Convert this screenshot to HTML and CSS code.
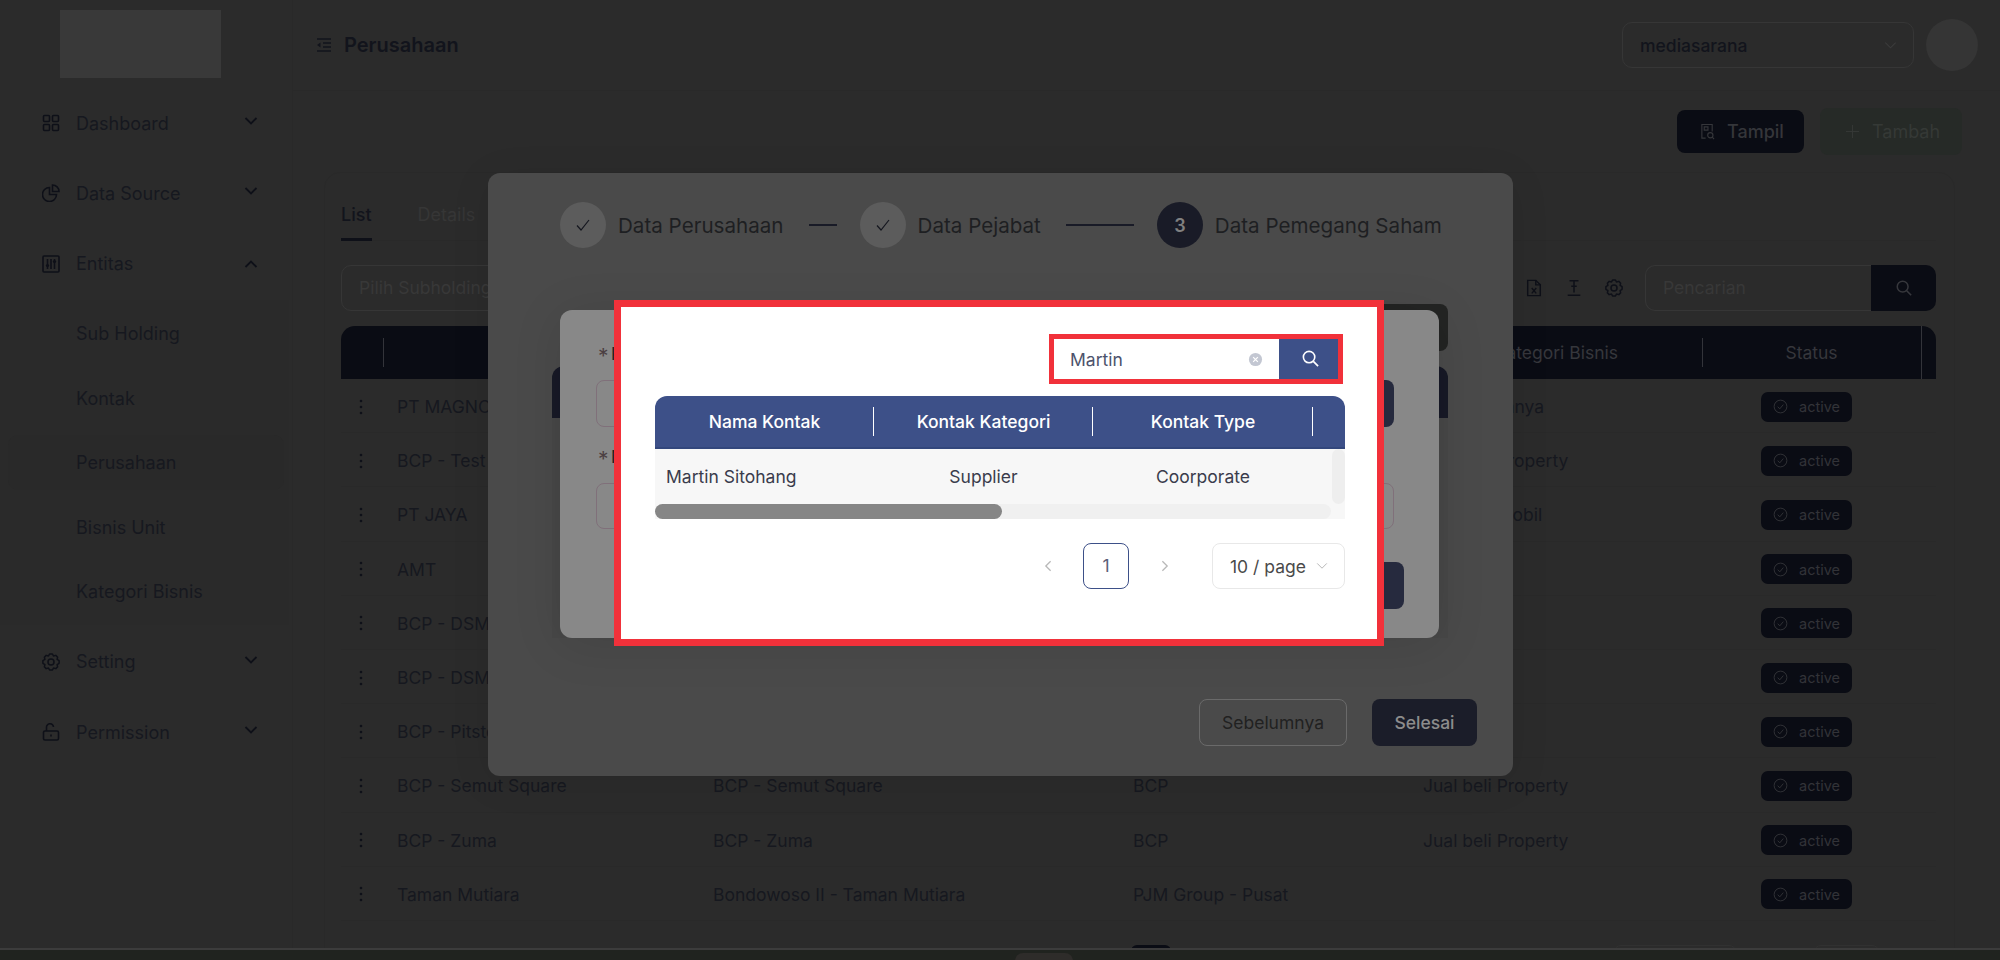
FILE: index.html
```html
<!DOCTYPE html>
<html>
<head>
    <title>Perusahaan</title>
    <link rel="stylesheet" href="styles.css">
</head>
<body>
<svg class="sprite" xmlns="http://www.w3.org/2000/svg">
    <symbol id="i-chevron" viewBox="0 0 16 16"><path d="M2.5 5l5.5 5.5L13.500 5" fill="none" stroke="currentColor"/></symbol>
    <symbol id="i-search" viewBox="0 0 20 20"><circle cx="8.500" cy="8.500" r="6" fill="none" stroke="currentColor" stroke-width="1.700"/><path d="M13 13l5 5" fill="none" stroke="currentColor" stroke-width="1.700"/></symbol>
    <symbol id="i-check" viewBox="0 0 16 16"><path d="M2 8.500l4 4.500 8-10" fill="none" stroke="currentColor" stroke-width="1.200"/></symbol>
    <symbol id="i-kebab" viewBox="0 0 4 16"><circle cx="2" cy="2" r="1.300" fill="currentColor"/><circle cx="2" cy="8" r="1.300" fill="currentColor"/><circle cx="2" cy="14" r="1.300" fill="currentColor"/></symbol>
    <symbol id="i-active" viewBox="0 0 16 16"><circle cx="8" cy="8" r="6.800" fill="none" stroke="currentColor" stroke-width="1"/><path d="M5 8.200l2.200 2.300L11 6" fill="none" stroke="currentColor" stroke-width="1"/></symbol>
    <symbol id="i-gear" viewBox="0 0 18 18"><g fill="none" stroke="currentColor" stroke-width="1.500" stroke-linejoin="round"><path d="M7.720.9h2.560l1.250 2 2.290-.53 1.810 1.810-.53 2.290 2 1.250v2.560l-2 1.250.53 2.290-1.810 1.810-2.290-.53-1.250 2H7.720l-1.250-2-2.290.53-1.810-1.810.53-2.290-2-1.250V7.720l2-1.250-.53-2.290 1.810-1.810 2.290.53z"/><circle cx="9" cy="9" r="3"/></g></symbol>
</svg>

<div class="app">
    <aside class="sidebar">
        <div class="logo-wrap"><div class="logo"></div></div>

        <div class="menu-item">
            <svg class="menu-icon" viewBox="0 0 18 18"><g fill="none" stroke="currentColor" stroke-width="1.600"><rect x="1.500" y="1.500" width="6" height="6" rx="1"/><rect x="10.500" y="1.500" width="6" height="6" rx="1"/><rect x="1.500" y="10.500" width="6" height="6" rx="1"/><rect x="10.500" y="10.500" width="6" height="6" rx="1"/></g></svg>
            <span>Dashboard</span>
            <svg class="menu-chevron"><use href="#i-chevron"/></svg>
        </div>
        <div class="menu-item">
            <svg class="menu-icon" viewBox="0 0 18 18"><g fill="none" stroke="currentColor" stroke-width="1.600"><path d="M7.500 3.500a7 7 0 1 0 7 7h-7z"/><path d="M10.500 1a6.500 6.500 0 0 1 6.500 6.500h-6.500z"/></g></svg>
            <span>Data Source</span>
            <svg class="menu-chevron"><use href="#i-chevron"/></svg>
        </div>
        <div class="menu-item">
            <svg class="menu-icon" viewBox="0 0 18 18"><g fill="none" stroke="currentColor" stroke-width="1.600"><rect x="1" y="1" width="16" height="16" rx="1"/><path d="M5.500 4v10M12.500 4v10M9 4v10"/></g><circle cx="5.500" cy="10.500" r="1.600" fill="currentColor"/><circle cx="12.500" cy="6.500" r="1.600" fill="currentColor"/></svg>
            <span>Entitas</span>
            <svg class="menu-chevron flip"><use href="#i-chevron"/></svg>
        </div>

        <div class="submenu">
            <div class="sub-item">Sub Holding</div>
            <div class="sub-item">Kontak</div>
            <div class="sub-item selected">Perusahaan</div>
            <div class="sub-item">Bisnis Unit</div>
            <div class="sub-item">Kategori Bisnis</div>
        </div>

        <div class="menu-item after-sub">
            <svg class="menu-icon"><use href="#i-gear"/></svg>
            <span>Setting</span>
            <svg class="menu-chevron"><use href="#i-chevron"/></svg>
        </div>
        <div class="menu-item">
            <svg class="menu-icon" viewBox="0 0 18 18"><g fill="none" stroke="currentColor" stroke-width="1.600"><rect x="1.500" y="8" width="15" height="9" rx="1.500"/><path d="M4.500 8V4.500a3.500 3.500 0 0 1 7-.5"/><path d="M9 11.500v2"/></g></svg>
            <span>Permission</span>
            <svg class="menu-chevron"><use href="#i-chevron"/></svg>
        </div>
    </aside>

    <main class="main">
        <header class="topbar">
            <svg class="topbar-icon" viewBox="0 0 16 16"><path d="M1 2h14M7 6h8M7 10h8M1 14h14" fill="none" stroke="currentColor" stroke-width="1.500"/><path d="M4.500 5.500L1 8l3.500 2.500z" fill="currentColor"/></svg>
            <h1 class="page-title">Perusahaan</h1>
            <div class="company-select">
                <span>mediasarana</span>
                <svg class="select-chevron"><use href="#i-chevron"/></svg>
            </div>
            <div class="avatar"></div>
        </header>

        <div class="actions">
            <button type="button" class="btn-show">
                <svg class="btn-icon" viewBox="0 0 16 18"><g fill="none" stroke="currentColor" stroke-width="1.200"><path d="M6 16H2V1.500h11V9"/><path d="M4.500 4h4v3.500h-4z"/><circle cx="11" cy="13" r="2.800"/><path d="M13 15l2 2"/></g></svg>
                Tampil
            </button>
            <button type="button" class="btn-add">
                <svg class="btn-icon" viewBox="0 0 16 16"><path d="M8 1v14M1 8h14" fill="none" stroke="currentColor" stroke-width="1"/></svg>
                Tambah
            </button>
        </div>

        <section class="card">
            <div class="tabs">
                <span class="tab active">List</span>
                <span class="tab">Details</span>
            </div>

            <div class="filters">
                <div class="subholding-select">Pilih Subholding</div>
                <div class="tools">
                    <svg class="tool-icon" viewBox="0 0 18 20"><g fill="none" stroke="currentColor" stroke-width="1.600"><path d="M2 1.500h9l5 5v12H2z"/><path d="M11 1.500v5h5"/><path d="M6.500 10l5 6M11.500 10l-5 6"/></g></svg>
                    <svg class="tool-icon" viewBox="0 0 18 20"><path d="M4 2h10M9 2v13M6 8h6M2 18h14" fill="none" stroke="currentColor" stroke-width="1.700"/></svg>
                    <svg class="tool-icon"><use href="#i-gear"/></svg>
                </div>
                <div class="page-search">
                    <div class="page-search-input">Pencarian</div>
                    <div class="page-search-btn"><svg class="search-icon"><use href="#i-search"/></svg></div>
                </div>
            </div>

            <div class="table-head">
                <div class="head-first"></div>
                <div class="head-cat">Kategori Bisnis</div>
                <div class="head-status">Status</div>
                <div class="head-last"></div>
            </div>

            <div class="table-row">
                <svg class="kebab"><use href="#i-kebab"/></svg><span>PT MAGNOLIA</span><span></span><span></span><span>Usaha Lainnya</span>
                <div class="badge"><svg class="badge-icon"><use href="#i-active"/></svg>active</div>
            </div>
            <div class="table-row">
                <svg class="kebab"><use href="#i-kebab"/></svg><span>BCP - Test</span><span></span><span></span><span>Jual beli Property</span>
                <div class="badge"><svg class="badge-icon"><use href="#i-active"/></svg>active</div>
            </div>
            <div class="table-row">
                <svg class="kebab"><use href="#i-kebab"/></svg><span>PT JAYA</span><span></span><span></span><span>Jual beli Mobil</span>
                <div class="badge"><svg class="badge-icon"><use href="#i-active"/></svg>active</div>
            </div>
            <div class="table-row">
                <svg class="kebab"><use href="#i-kebab"/></svg><span>AMT</span><span></span><span></span><span></span>
                <div class="badge"><svg class="badge-icon"><use href="#i-active"/></svg>active</div>
            </div>
            <div class="table-row">
                <svg class="kebab"><use href="#i-kebab"/></svg><span>BCP - DSM</span><span></span><span></span><span></span>
                <div class="badge"><svg class="badge-icon"><use href="#i-active"/></svg>active</div>
            </div>
            <div class="table-row">
                <svg class="kebab"><use href="#i-kebab"/></svg><span>BCP - DSM</span><span></span><span></span><span></span>
                <div class="badge"><svg class="badge-icon"><use href="#i-active"/></svg>active</div>
            </div>
            <div class="table-row">
                <svg class="kebab"><use href="#i-kebab"/></svg><span>BCP - Pitstop</span><span></span><span></span><span></span>
                <div class="badge"><svg class="badge-icon"><use href="#i-active"/></svg>active</div>
            </div>
            <div class="table-row">
                <svg class="kebab"><use href="#i-kebab"/></svg><span>BCP - Semut Square</span><span>BCP - Semut Square</span><span>BCP</span><span>Jual beli Property</span>
                <div class="badge"><svg class="badge-icon"><use href="#i-active"/></svg>active</div>
            </div>
            <div class="table-row">
                <svg class="kebab"><use href="#i-kebab"/></svg><span>BCP - Zuma</span><span>BCP - Zuma</span><span>BCP</span><span>Jual beli Property</span>
                <div class="badge"><svg class="badge-icon"><use href="#i-active"/></svg>active</div>
            </div>
            <div class="table-row">
                <svg class="kebab"><use href="#i-kebab"/></svg><span>Taman Mutiara</span><span>Bondowoso II - Taman Mutiara</span><span>PJM Group - Pusat</span><span></span>
                <div class="badge"><svg class="badge-icon"><use href="#i-active"/></svg>active</div>
            </div>

            <div class="page-pager">
                <div class="pager-current"></div>
                <div class="pager-jump"></div>
                <div class="pager-size"></div>
            </div>
        </section>
    </main>
</div>
<div class="taskbar"><div class="taskbar-tab"></div></div>

<!-- step form modal -->
<div class="modal-steps">
    <div class="steps">
        <div class="step-dot done"><svg class="step-check"><use href="#i-check"/></svg></div>
        <span class="step-label">Data Perusahaan</span>
        <div class="step-line short"></div>
        <div class="step-dot done"><svg class="step-check"><use href="#i-check"/></svg></div>
        <span class="step-label">Data Pejabat</span>
        <div class="step-line long"></div>
        <div class="step-dot current">3</div>
        <span class="step-label">Data Pemegang Saham</span>
    </div>
    <div class="steps-body">
        <div class="steps-add"></div>
        <div class="steps-table-head"></div>
        <div class="steps-table-body"></div>
    </div>
    <div class="steps-footer">
        <button type="button" class="btn-prev">Sebelumnya</button>
        <button type="button" class="btn-finish">Selesai</button>
    </div>
</div>

<!-- shareholder form -->
<div class="modal-form">
    <div class="form-label"><i>*</i>K</div>
    <div class="form-row">
        <div class="form-input"></div>
        <div class="form-pick"></div>
    </div>
    <div class="form-label second"><i>*</i>N</div>
    <div class="form-row">
        <div class="form-input"></div>
    </div>
    <div class="form-save"></div>
</div>

<!-- highlighted contact picker -->
<div class="modal-picker">
    <div class="picker-search">
        <div class="picker-input">
            <span>Martin</span>
            <svg class="clear-icon" viewBox="0 0 16 16"><circle cx="8" cy="8" r="7" fill="#c3c7d2"/><path d="M5.500 5.500l5 5M10.500 5.500l-5 5" stroke="#fff" stroke-width="1.300"/></svg>
        </div>
        <div class="picker-btn"><svg class="picker-search-icon"><use href="#i-search"/></svg></div>
    </div>

    <div class="picker-table">
        <div class="picker-head">
            <div class="picker-th">Nama Kontak</div>
            <div class="picker-th">Kontak Kategori</div>
            <div class="picker-th">Kontak Type</div>
            <div></div>
        </div>
        <div class="picker-row">
            <div class="picker-td first">Martin Sitohang</div>
            <div class="picker-td">Supplier</div>
            <div class="picker-td">Coorporate</div>
            <div class="picker-vscroll"></div>
        </div>
        <div class="picker-hscroll">
            <div class="picker-track"><div class="picker-thumb"></div></div>
        </div>
    </div>

    <div class="picker-pager">
        <svg class="pager-arrow left"><use href="#i-chevron"/></svg>
        <div class="pager-number">1</div>
        <svg class="pager-arrow right"><use href="#i-chevron"/></svg>
        <div class="pager-select">10 / page <svg class="pager-select-chevron"><use href="#i-chevron"/></svg></div>
    </div>
</div>
</body>
</html>
```

FILE: styles.css
```css
html, body {
    margin: 0;
    padding: 0;
    height: 960px;
    overflow: hidden;
    background-color: #2b2b2b;
    color: #16181f;
    font-family: Inter, "Noto Sans", sans-serif;
}

button {
    font-family: inherit;
    border: none;
    padding: 0;
}

.sprite {
    display: none;
}

.app {
    display: flex;
    height: 948px;
    overflow: hidden;
}

/* sidebar */
.sidebar {
    width: 292px;
    flex-shrink: 0;
    border-right: 1px solid #292929;
}

.logo-wrap {
    height: 98px;
    padding: 10px 0 0 60px;
    box-sizing: border-box;
}

.logo {
    width: 161px;
    height: 68px;
    background-color: #393939;
}

.menu-item {
    display: flex;
    align-items: center;
    height: 50px;
    margin-bottom: 20.300px;
    padding-left: 42px;
    font-size: 18px;
    color: #16181f;
}

.menu-item span {
    margin-left: 16px;
}

.menu-icon {
    width: 18px;
    height: 18px;
    color: #0e1018;
}

.menu-chevron {
    width: 16px;
    height: 16px;
    margin-left: auto;
    margin-right: 33px;
    margin-top: -4px;
    color: #0e1018;
    stroke-width: 1.800;
}

.menu-chevron.flip {
    transform: rotate(180deg);
    margin-top: 0;
}

.submenu {
    width: 289px;
    margin-top: -9px;
    padding: 6.500px 0 5.500px;
    box-sizing: border-box;
    height: 325px;
    background-color: #2a2a2a;
}

.sub-item {
    height: 55px;
    margin-bottom: 9.500px;
    padding-left: 76px;
    font-size: 18px;
    line-height: 56px;
    color: #16181f;
}

.sub-item:last-child {
    margin-bottom: 0;
}

.sub-item.selected {
    margin: 0 5px 9.500px 8px;
    padding-left: 68px;
    border-radius: 10px;
    background-color: #292929;
}

.menu-item.after-sub {
    margin-top: 12px;
}

/* main area */
.main {
    flex: 1;
    min-width: 0;
}

.topbar {
    display: flex;
    align-items: center;
    height: 91px;
    box-sizing: border-box;
    padding: 0 22px 0 23px;
    border-bottom: 1px solid #292929;
}

.topbar-icon {
    width: 16px;
    height: 16px;
    color: #12141c;
}

.page-title {
    margin: 0 0 0 12px;
    font-size: 20px;
    font-weight: 600;
    color: #12141c;
}

.company-select {
    display: flex;
    align-items: center;
    justify-content: space-between;
    width: 292px;
    height: 46px;
    margin-left: auto;
    padding: 0 15px 0 17px;
    box-sizing: border-box;
    border: 1px solid #363636;
    border-radius: 10px;
    font-size: 17.500px;
    font-weight: 500;
    color: #12141c;
}

.select-chevron {
    width: 15px;
    height: 15px;
    color: #3c3c3c;
    stroke-width: 1.100;
}

.avatar {
    width: 52px;
    height: 52px;
    margin-left: 12px;
    border-radius: 50%;
    background-color: #353535;
}

.actions {
    display: flex;
    align-items: center;
    justify-content: flex-end;
    gap: 16px;
    height: 47px;
    padding: 17px 38px 0 0;
}

.btn-show, .btn-add {
    display: flex;
    align-items: center;
    font-size: 18px;
    font-weight: 500;
    border-radius: 8px;
}

.btn-show {
    width: 127px;
    height: 43px;
    padding-left: 23px;
    box-sizing: border-box;
    background-color: #0a0c14;
    color: #35363a;
}

.btn-add {
    width: 142px;
    height: 47px;
    padding-left: 25px;
    box-sizing: border-box;
    font-weight: 400;
    background-color: #262a27;
    color: #353936;
}

.btn-icon {
    width: 15px;
    height: 17px;
    margin-right: 12px;
}

.card {
    width: 1631px;
    height: 800px;
    margin: 17px 0 0 31px;
    padding: 0 18px 0 16px;
    box-sizing: border-box;
    border: 1px solid #292929;
    border-radius: 16px;
}

.tabs {
    display: flex;
    gap: 46px;
    height: 68px;
    box-sizing: border-box;
    border-bottom: 1px solid #292929;
    padding-top: 29px;
}

.tab {
    height: 39px;
    box-sizing: border-box;
    font-size: 18px;
    line-height: 26px;
    color: #363636;
}

.tab.active {
    border-bottom: 3px solid #0e1018;
    font-weight: 500;
    color: #12141c;
}

.filters {
    display: flex;
    align-items: center;
    height: 46px;
    margin-top: 24px;
    margin-bottom: 15px;
}

.subholding-select {
    width: 400px;
    height: 46px;
    box-sizing: border-box;
    padding-left: 17px;
    line-height: 44px;
    font-size: 17.500px;
    color: #383838;
    border: 1px solid #363636;
    border-radius: 10px;
}

.tools {
    display: flex;
    align-items: center;
    gap: 22px;
    margin-left: auto;
    margin-right: 22px;
}

.tool-icon {
    width: 18px;
    height: 18px;
    color: #0e1018;
}

.page-search {
    display: flex;
    width: 291px;
    height: 46px;
}

.page-search-input {
    flex: 1;
    box-sizing: border-box;
    padding-left: 17px;
    line-height: 44px;
    font-size: 17.500px;
    color: #383838;
    border: 1px solid #363636;
    border-right: none;
    border-radius: 10px 0 0 10px;
}

.page-search-btn {
    display: flex;
    align-items: center;
    justify-content: center;
    width: 65px;
    background-color: #0a0c14;
    border-radius: 0 10px 10px 0;
}

.search-icon {
    width: 18px;
    height: 18px;
    color: #36373c;
}

.table-head {
    display: grid;
    grid-template-columns: 43px 1318px 219px 16px;
    align-items: center;
    height: 53px;
    font-size: 17.500px;
    color: #36373c;
    background-color: #0a0c14;
    border-radius: 14px 14px 0 0;
}

.head-first {
    height: 29px;
    border-right: 1px solid #33343a;
}

.head-cat {
    padding-right: 84px;
    text-align: right;
    height: 29px;
    line-height: 29px;
    box-sizing: border-box;
    border-right: 1px solid #33343a;
    margin-right: -1px;
}

.head-status {
    text-align: center;
    line-height: 53px;
}

.head-last {
    height: 53px;
    border-left: 1px solid #33343a;
}

.table-row {
    display: grid;
    grid-template-columns: 56px 316px 420px 290px 338px 91px;
    align-items: center;
    height: 54.200px;
    padding-top: 2px;
    box-sizing: border-box;
    border-bottom: 1px solid #292929;
    font-size: 17.500px;
    color: #16181f;
}

.kebab {
    width: 4px;
    height: 16px;
    margin-left: 18px;
    color: #0e1018;
}

.badge {
    display: flex;
    align-items: center;
    height: 30px;
    padding-left: 12px;
    border-radius: 7px;
    background-color: #0a0c14;
    font-size: 14.500px;
    color: #323338;
}

.badge-icon {
    width: 15px;
    height: 15px;
    margin-right: 11px;
}

.page-pager {
    display: flex;
    margin-top: 24px;
}

.pager-current {
    width: 40px;
    height: 40px;
    margin-left: 790px;
    border-radius: 6px;
    background-color: #0a0c14;
}

.pager-jump, .pager-size {
    height: 40px;
    border-radius: 8px;
    border: 1px solid #313131;
    box-sizing: border-box;
}

.pager-jump {
    width: 124px;
    margin-left: 442px;
}

.pager-size {
    width: 67px;
    margin-left: 76px;
}

.taskbar {
    position: relative;
    height: 12px;
    box-sizing: border-box;
    border-top: 2px solid #3c3c3c;
    background-color: #20231f;
    overflow: hidden;
}

.taskbar-tab {
    width: 58px;
    height: 8px;
    margin: 3px 0 0 1015px;
    border-radius: 8px 8px 0 0;
    background-color: #2e2c2a;
}

/* step form modal */
.modal-steps {
    position: absolute;
    left: 488px;
    top: 173px;
    width: 1025px;
    height: 603px;
    box-sizing: border-box;
    padding: 29px 36px 0 64px;
    background-color: #4a4a4a;
    border-radius: 12px;
    box-shadow: 0 6px 40px rgba(0, 0, 0, 0.08);
}

.steps {
    display: flex;
    align-items: center;
    height: 46px;
    margin-left: 8px;
    font-size: 20.600px;
    color: #1e1f22;
}

.step-dot {
    display: flex;
    align-items: center;
    justify-content: center;
    width: 46px;
    height: 46px;
    border-radius: 50%;
    font-size: 18px;
    font-weight: 600;
}

.step-dot.done {
    background-color: #5c5c5c;
    color: #15171f;
}

.step-dot.current {
    background-color: #191b27;
    color: #808080;
}

.step-check {
    width: 16px;
    height: 16px;
}

.step-label {
    margin-left: 12px;
}

.step-line {
    height: 2px;
    margin: 0 23px 0 25px;
    background-color: #191b27;
}

.step-line.short {
    width: 28px;
}

.step-line.long {
    width: 68px;
}

.steps-body {
    width: 896px;
    margin-top: 56px;
}

.steps-add {
    width: 100px;
    height: 47px;
    margin-left: auto;
    border-radius: 8px;
    background-color: #232423;
}

.steps-table-head {
    height: 52px;
    margin-top: 15px;
    border-radius: 12px 12px 0 0;
    background-color: #171926;
}

.steps-table-body {
    height: 220px;
    background-color: #474747;
}

.steps-footer {
    display: flex;
    justify-content: flex-end;
    gap: 25px;
    margin-top: 61px;
}

.btn-prev, .btn-finish {
    height: 47px;
    border-radius: 8px;
    font-size: 17.500px;
}

.btn-prev {
    width: 148px;
    background-color: transparent;
    border: 1px solid #6a6a6a;
    color: #212121;
}

.btn-finish {
    width: 105px;
    background-color: #1b1d29;
    color: #8c8c8c;
    font-weight: 500;
}

/* shareholder form */
.modal-form {
    position: absolute;
    left: 560px;
    top: 310px;
    width: 879px;
    height: 328px;
    box-sizing: border-box;
    padding: 33px 45px 0 36px;
    background-color: #888888;
    border-radius: 12px;
    box-shadow: 0 6px 50px rgba(0, 0, 0, 0.1);
}

.form-label {
    height: 22px;
    margin-bottom: 15px;
    font-size: 17.500px;
    line-height: 22px;
    color: #222;
}

.form-label i {
    display: inline-block;
    width: 15px;
    padding-left: 2px;
    box-sizing: border-box;
    font-size: 21px;
    font-style: normal;
    vertical-align: -4px;
    color: #4c3f42;
}

.form-label.second {
    margin-top: 19px;
}

.form-row {
    display: flex;
    height: 47px;
}

.form-row + .form-label + .form-row {
    height: 46px;
}

.form-input {
    flex: 1;
    box-sizing: border-box;
    border: 1px solid #80707a;
    border-radius: 8px;
}

.form-pick {
    width: 100px;
    margin-left: 10px;
    border-radius: 8px;
    background-color: #262a3e;
}

.form-save {
    width: 100px;
    height: 47px;
    margin: 33px -10px 0 auto;
    border-radius: 8px;
    background-color: #262a3e;
}

/* contact picker */
.modal-picker {
    position: absolute;
    left: 614px;
    top: 300px;
    width: 770px;
    height: 346px;
    box-sizing: border-box;
    padding: 27px 32px 0 34px;
    background-color: #ffffff;
    border: 7px solid #f1313a;
    color: #3a3c4c;
}

.picker-search {
    display: flex;
    width: 294px;
    height: 50px;
    margin-left: 394px;
    box-sizing: border-box;
    border: 5px solid #f1313a;
}

.picker-input {
    flex: 1;
    display: flex;
    align-items: center;
    justify-content: space-between;
    padding: 0 16px;
    font-size: 17.500px;
    color: #4c526c;
}

.clear-icon {
    width: 15px;
    height: 15px;
}

.picker-btn {
    display: flex;
    align-items: center;
    justify-content: center;
    width: 59px;
    padding: 0 0 2px 4px;
    box-sizing: border-box;
    background-color: #3d5088;
}

.picker-search-icon {
    width: 19px;
    height: 19px;
    color: #ffffff;
}

.picker-table {
    width: 690px;
    margin-top: 12px;
}

.picker-head {
    display: grid;
    grid-template-columns: 219px 219px 220px 32px;
    align-items: center;
    height: 53px;
    box-sizing: border-box;
    border-bottom: 2px solid #33477c;
    border-radius: 12px 12px 0 0;
    background-color: #3d5088;
}

.picker-th {
    position: relative;
    text-align: center;
    font-size: 17.500px;
    font-weight: 500;
    color: #ffffff;
}

.picker-th::after {
    content: "";
    position: absolute;
    right: 0;
    top: -4px;
    width: 1.500px;
    height: 29px;
    background-color: #ffffff;
}

.picker-row {
    display: grid;
    grid-template-columns: 219px 219px 220px 19px 13px;
    align-items: center;
    height: 55px;
    background-color: #f7f7f7;
    font-size: 17.500px;
}

.picker-td {
    text-align: center;
}

.picker-td.first {
    text-align: left;
    padding-left: 11px;
}

.picker-vscroll {
    grid-column: 5;
    height: 55px;
    border-radius: 7px;
    background-color: #eeeeee;
}

.picker-hscroll {
    height: 15px;
    background-color: #f7f7f7;
}

.picker-track {
    width: 676px;
    height: 15px;
    border-radius: 8px;
    background-color: #f0f0f0;
}

.picker-thumb {
    width: 347px;
    height: 15px;
    border-radius: 8px;
    background-color: #868686;
}

.picker-pager {
    display: flex;
    align-items: center;
    justify-content: flex-end;
    width: 690px;
    height: 46px;
    margin-top: 24px;
}

.pager-arrow {
    width: 14px;
    height: 14px;
    color: #b9b9b9;
    stroke-width: 1.500;
}

.pager-arrow.left {
    transform: rotate(90deg);
}

.pager-arrow.right {
    margin-right: 40px;
    transform: rotate(-90deg);
}

.pager-number {
    width: 46px;
    height: 46px;
    margin: 0 29px 0 28px;
    box-sizing: border-box;
    border: 1.500px solid #3d5088;
    border-radius: 8px;
    text-align: center;
    line-height: 43px;
    font-size: 17.500px;
    color: #5a6078;
}

.pager-select {
    display: flex;
    align-items: center;
    justify-content: space-between;
    width: 133px;
    height: 46px;
    box-sizing: border-box;
    padding: 0 15px 0 17px;
    border: 1.500px solid #e8e8e8;
    border-radius: 8px;
    font-size: 17.500px;
    color: #4a4a4a;
}

.pager-select-chevron {
    width: 14px;
    height: 14px;
    color: #b5b5b5;
    stroke-width: 1.100;
}
```
